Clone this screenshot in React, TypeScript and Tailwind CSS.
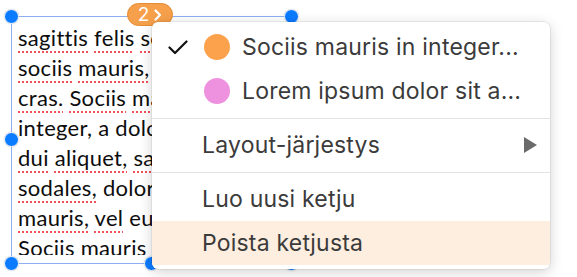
const lines: { parts: { t: string; wavy?: boolean }[] }[] = [
  { parts: [{ t: "sagittis", wavy: true }, { t: " " }, { t: "felis", wavy: true }, { t: " " }, { t: "sodales", wavy: true }] },
  { parts: [{ t: "sociis", wavy: true }, { t: " " }, { t: "mauris,", wavy: true }, { t: " vel" }] },
  { parts: [{ t: "cras.", wavy: true }, { t: " " }, { t: "Sociis", wavy: true }, { t: " " }, { t: "mauris", wavy: true }] },
  { parts: [{ t: "integer, a dolor netus" }] },
  { parts: [{ t: "dui", wavy: true }, { t: " " }, { t: "aliquet,", wavy: true }, { t: " " }, { t: "sagittis", wavy: true }] },
  { parts: [{ t: "sodales,", wavy: true }, { t: " dolor" }] },
  { parts: [{ t: "mauris,", wavy: true }, { t: " " }, { t: "vel", wavy: true }, { t: " euismod" }] },
  { parts: [{ t: "Sociis mauris in" }] },
];

function Handle({ className }: { className: string }) {
  return (
    <div
      className={`absolute w-[15px] h-[15px] -ml-[7.5px] -mt-[7.5px] rounded-full bg-[#0b7bff] border-[1.5px] border-white shadow-[0_0_1px_rgba(0,0,0,0.3)] ${className}`}
    />
  );
}

function MenuRow({ children, active }: { children: React.ReactNode; active?: boolean }) {
  return (
    <div className={`h-[44px] flex items-center ${active ? "bg-[#fdeee0]" : ""}`}>{children}</div>
  );
}

function Separator() {
  return (
    <div className="h-[10px] flex items-center">
      <div className="w-full h-px bg-[#e3e3e3]" />
    </div>
  );
}

export default function App() {
  return (
    <div className="relative w-[577px] h-[277px] overflow-hidden bg-white">
      {/* text frame */}
      <div className="absolute left-[11px] top-[16px] w-[281px] h-[248px] border border-[#8eaef0]">
        <div
          className="h-[238px] overflow-hidden pl-[6px] pt-[6px] text-[22px] leading-[30px] tracking-[0.3px] text-[#0d0d0d]"
          style={{ fontFamily: "Lato, 'Noto Sans', sans-serif" }}
        >
          {lines.map((l, i) => (
            <div key={i} className="whitespace-nowrap">
              {l.parts.map((p, j) =>
                p.wavy ? (
                  <span
                    key={j}
                    className="underline decoration-dotted decoration-[#f0525c] decoration-2 underline-offset-[5px]"
                  >
                    {p.t}
                  </span>
                ) : (
                  <span key={j}>{p.t}</span>
                )
              )}
            </div>
          ))}
        </div>
      </div>

      <Handle className="left-[11px] top-[16px]" />
      <Handle className="left-[291px] top-[16px]" />
      <Handle className="left-[11px] top-[139px]" />
      <Handle className="left-[291px] top-[139px]" />
      <Handle className="left-[11px] top-[263px]" />
      <Handle className="left-[151px] top-[263px]" />
      <Handle className="left-[291px] top-[263px]" />

      {/* thread badge */}
      <div
        className="absolute left-[127px] top-[3px] w-[46px] h-[23px] rounded-full bg-[#f6a04b] border border-[#e48c35] flex items-start justify-center gap-[5px] pt-[1px] text-white text-[19px] leading-[20px]"
        style={{ fontFamily: "Inter, sans-serif" }}
      >
        <span>2</span>
        <svg width="8" height="12" viewBox="0 0 8 12" className="mt-[4px]">
          <path d="M1.5 1.5 L6 6 L1.5 10.5" fill="none" stroke="white" strokeWidth="2.2" strokeLinecap="round" strokeLinejoin="round" />
        </svg>
      </div>

      {/* context menu */}
      <div
        className="absolute left-[152px] top-[22px] w-[398px] rounded-[6px] bg-white pt-[3px] pb-[4px] overflow-hidden shadow-[0_3px_14px_rgba(0,0,0,0.18),0_0_0_0.5px_rgba(0,0,0,0.12)] text-[23px] tracking-[0.2px] text-[#3b3b3b]"
        style={{ fontFamily: "Inter, 'Noto Sans', sans-serif" }}
      >
        <MenuRow>
          <svg width="20" height="15" viewBox="0 0 20 15" className="ml-[16px]">
            <path d="M1.5 7.5 L7 13 L18.5 1.5" fill="none" stroke="#111" strokeWidth="2.2" strokeLinecap="round" strokeLinejoin="round" />
          </svg>
          <span className="ml-[16px] w-[26px] h-[26px] rounded-full bg-[#fca24c]" />
          <span className="ml-[12px]">Sociis mauris in integer...</span>
        </MenuRow>
        <MenuRow>
          <span className="ml-[52px] w-[26px] h-[26px] rounded-full bg-[#ee92df]" />
          <span className="ml-[12px]">Lorem ipsum dolor sit a...</span>
        </MenuRow>
        <Separator />
        <MenuRow>
          <span className="ml-[50px] flex-1">Layout-järjestys</span>
          <svg width="13" height="16" viewBox="0 0 13 16" className="mr-[13px]">
            <path d="M0 0 L13 8 L0 16 Z" fill="#6b6b6b" />
          </svg>
        </MenuRow>
        <Separator />
        <MenuRow>
          <span className="ml-[50px]">Luo uusi ketju</span>
        </MenuRow>
        <MenuRow active>
          <span className="ml-[50px]">Poista ketjusta</span>
        </MenuRow>
      </div>
    </div>
  );
}
